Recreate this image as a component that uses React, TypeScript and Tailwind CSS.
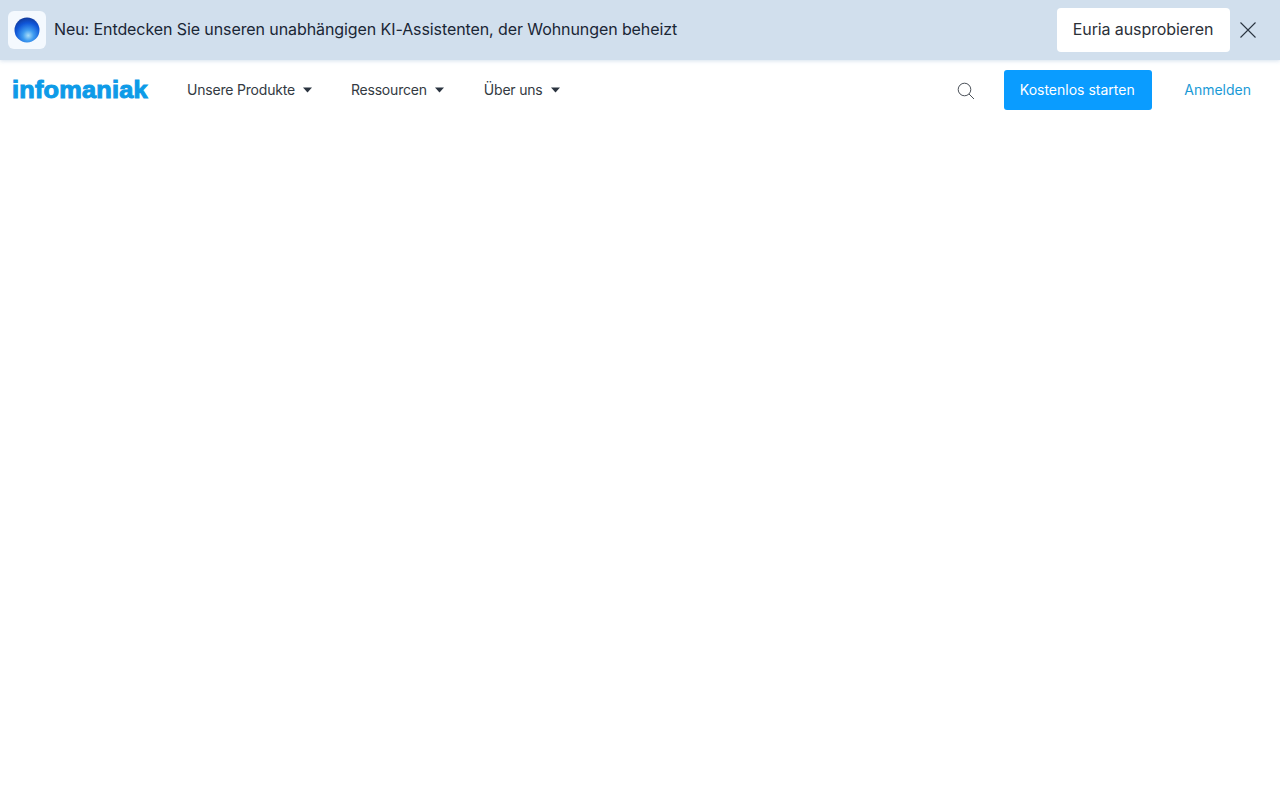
export default function App() {
  const Caret = () => (
    <svg width="9" height="6" viewBox="0 0 9 6" className="ml-[8px] mt-[2px]">
      <path d="M0 0.5h9L4.5 5.5z" fill="#2b3440" />
    </svg>
  );
  return (
    <div className="min-h-[800px] bg-white font-['Inter',sans-serif]">
      <div className="h-[60px] bg-[#d1dfed] flex items-center pl-[8px] pr-[22px] shadow-[0_1px_4px_rgba(209,223,237,0.9)]">
        <div className="w-[38px] h-[38px] rounded-[6px] bg-[#f4f9fe] flex items-center justify-center">
          <svg width="26" height="26" viewBox="0 0 26 26">
            <defs>
              <radialGradient id="orb" cx="0.55" cy="0.72" r="0.72">
                <stop offset="0" stopColor="#a8ddf8" />
                <stop offset="0.3" stopColor="#3f9cf0" />
                <stop offset="0.7" stopColor="#0f56d8" />
                <stop offset="1" stopColor="#123a9c" />
              </radialGradient>
            </defs>
            <circle cx="13" cy="13" r="12.5" fill="url(#orb)" />
          </svg>
        </div>
        <span className="ml-[8px] mb-[2px] text-[16px] text-[#1a2635] tracking-[-0.09px]">
          Neu: Entdecken Sie unseren unabhängigen KI-Assistenten, der Wohnungen beheizt
        </span>
        <button className="ml-auto w-[173px] h-[44px] bg-white rounded-[4px] text-[16px] tracking-[-0.1px] text-[#2b3038] flex items-center justify-center pb-[2px] pr-[1px] mr-[1px]">
          Euria ausprobieren
        </button>
        <svg width="18" height="18" viewBox="0 0 18 18" className="ml-[9px] -translate-x-[1px]">
          <path d="M1.5 1.5l15 15M16.5 1.5l-15 15" stroke="#2a3440" strokeWidth="1.1" fill="none" />
        </svg>
      </div>
      <div className="h-[60px] flex items-center pl-[12px] pr-[29px]">
        <span className="w-[136px] origin-left scale-x-[1.1] font-['Liberation_Sans',sans-serif] font-bold text-[23px] leading-none tracking-[0.2px] text-[#0d9be8] [-webkit-text-stroke:1px_#0d9be8]">
          infomaniak
        </span>
        <nav className="ml-[39px] flex items-center text-[14px] tracking-[-0.2px] text-[#333a42] pb-[2px]">
          <span className="flex items-center">Unsere Produkte<Caret /></span>
          <span className="flex items-center ml-[39px]">Ressourcen<Caret /></span>
          <span className="flex items-center ml-[40px]">Über uns<Caret /></span>
        </nav>
        <svg width="18" height="18" viewBox="0 0 18 18" className="ml-auto mt-[2px]">
          <circle cx="7.5" cy="7.5" r="6.3" stroke="#4a5058" strokeWidth="1" fill="none" />
          <path d="M12 12l5 5" stroke="#4a5058" strokeWidth="1" fill="none" />
        </svg>
        <button className="ml-[29px] w-[148px] h-[40px] rounded-[3px] bg-[#0a9cff] text-white text-[14px] flex items-center justify-center pb-[2px] pr-[2px]">
          Kostenlos starten
        </button>
        <span className="ml-[32px] text-[14px] text-[#1a9ad6] pb-[2px]">Anmelden</span>
      </div>
    </div>
  );
}
